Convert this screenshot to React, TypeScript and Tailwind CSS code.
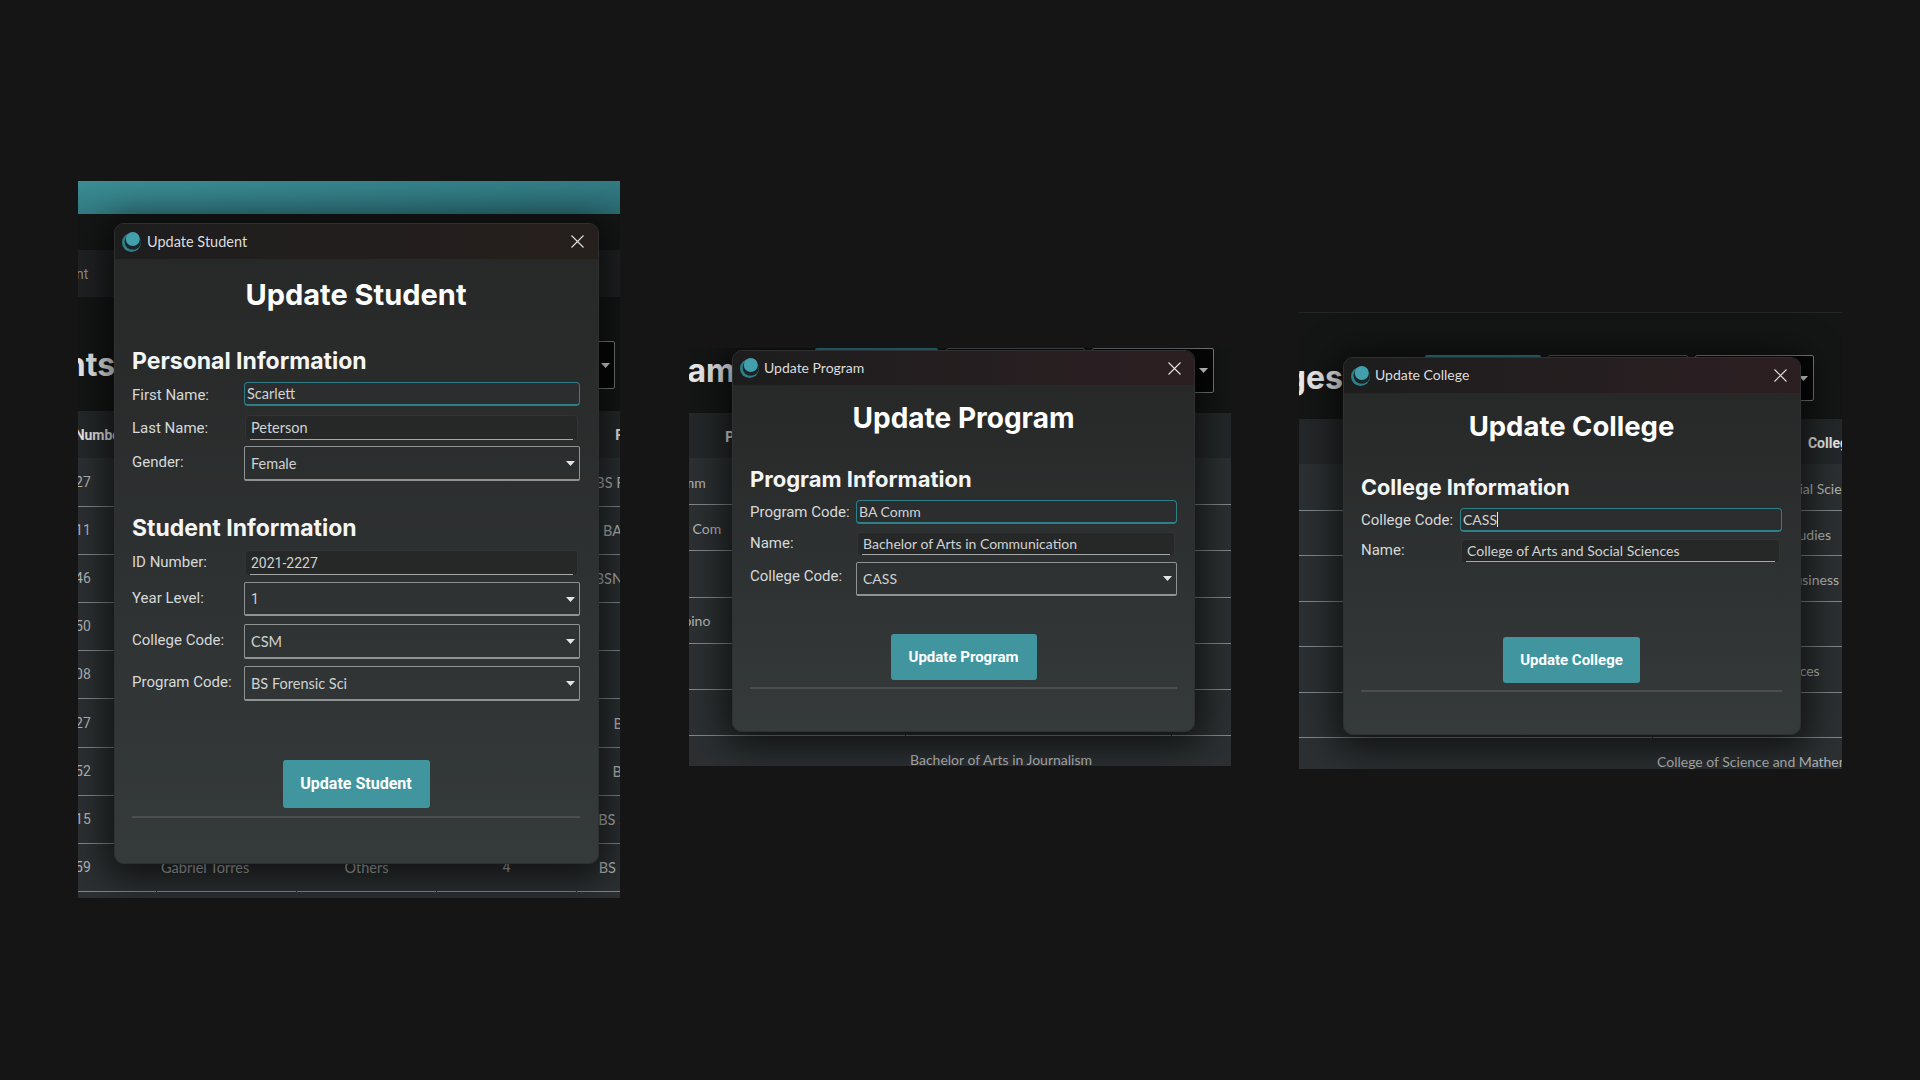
import React from "react";

const Logo = () => (
  <svg width="19" height="20" viewBox="0 0 19 20" className="shrink-0">
    <circle cx="9.5" cy="10.5" r="9.5" fill="#2d7f8a" />
    <circle cx="10.8" cy="9.6" r="8.2" fill="#1b2528" />
    <circle cx="10.8" cy="7" r="7" fill="#42a0ad" />
  </svg>
);

const CloseIcon = () => (
  <svg width="13" height="13" viewBox="0 0 13 13" className="shrink-0">
    <path d="M0.5 0.5L12.5 12.5M12.5 0.5L0.5 12.5" stroke="#e0e0e0" strokeWidth="1.1" />
  </svg>
);

const Caret = () => (
  <svg width="9" height="5" viewBox="0 0 9 5" className="shrink-0">
    <path d="M0 0H9L4.5 5Z" fill="#e4e6e6" />
  </svg>
);

// labelClass carries width and line height, valueClass the font of the value
type FieldProps = { label: string; value: string; labelClass: string; valueClass: string; box: string };

const FocusedInput = ({ label, value, labelClass, valueClass, box, caret }: FieldProps & { caret?: boolean }) => (
  <div className={`flex ${box}`}>
    <div className={`${labelClass} shrink-0 text-[15px] text-[#d6d9d9]`}>{label}</div>
    <div className={`flex-1 flex items-center rounded-[4px] border border-[#2f7f88] border-b-2 bg-[#2b2d2e] pl-[2px] text-[#d0d3d3] ${valueClass}`}>
      {value}
      {caret && <span className="w-px h-[15px] bg-[#e8e8e8]" />}
    </div>
  </div>
);

const PlainInput = ({ label, value, labelClass, valueClass, box }: FieldProps) => (
  <div className={`flex ${box}`}>
    <div className={`${labelClass} shrink-0 text-[15px] text-[#d6d9d9]`}>{label}</div>
    <div className="flex-1 ml-px mr-[2px] rounded-[4px] border border-[#313334] border-b-0 bg-[#262828] px-[4px]">
      <div className={`h-full flex items-center border-b border-[#a4a8a9] pl-px text-[#cfd2d2] ${valueClass}`}>{value}</div>
    </div>
  </div>
);

const SelectBox = ({ label, value, labelClass, valueClass, box }: FieldProps) => (
  <div className={`flex ${box}`}>
    <div className={`${labelClass} shrink-0 text-[15px] text-[#d6d9d9]`}>{label}</div>
    <div className={`flex-1 flex items-center justify-between rounded-[2px] border border-[#909394] border-b-2 pl-[6px] pr-[4px] text-[#cfd2d2] ${valueClass}`}>
      {value}
      <Caret />
    </div>
  </div>
);

type DialogProps = {
  title: string;
  place: string;
  barClass: string;
  bodyClass: string;
  titleClass: string;
  headingClass: string;
  children: React.ReactNode;
};

// the dialog floats over the app window behind it
const Dialog = ({ title, place, barClass, bodyClass, titleClass, headingClass, children }: DialogProps) => (
  <div className={`absolute ${place} flex flex-col overflow-hidden rounded-[10px] border border-[#2e3031] shadow-[0_6px_36px_8px_rgba(0,0,0,0.65)]`}>
    <div className={`flex shrink-0 items-center pl-[7px] ${barClass}`}>
      <Logo />
      <span className={`flex-1 font-['Lato'] text-[#dcdcdc] ${titleClass}`}>{title}</span>
      <CloseIcon />
    </div>
    <div className={`flex-1 bg-gradient-to-b from-[#272828] to-[#353a3b] pl-[17px] ${bodyClass}`}>
      <h1 className={`text-center font-['Inter'] font-bold leading-[36px] text-white ${headingClass}`}>{title}</h1>
      {children}
    </div>
  </div>
);

const Section = ({ text, className }: { text: string; className: string }) => (
  <h2 className={`font-['Inter'] font-bold leading-[30px] text-[#f4f5f5] ${className}`}>{text}</h2>
);

const SubmitButton = ({ text, className }: { text: string; className: string }) => (
  <button className={`mx-auto block rounded-[3px] bg-[#40959f] font-bold text-white ${className}`}>{text}</button>
);

const Divider = ({ className }: { className: string }) => <div className={`h-[2px] bg-[#4a4e4f] ${className}`} />;

type RowProps = { cells: string[]; aligns: string[]; grid: string; height: string; header?: boolean };

const TableRow = ({ cells, aligns, grid, height, header }: RowProps) => (
  <div className={`grid gap-x-px ${grid} ${height} ${header ? "bg-[#25282a]" : "bg-[#2c3032]"}`}>
    {cells.map((cell, i) => (
      <div
        key={i}
        className={`flex items-center whitespace-nowrap border-b ${
          header
            ? `justify-center border-[#2e3132] text-[14px] font-bold text-[#e8e9e9] ${aligns[i]}`
            : `border-[#7f888b] text-[#b4b7b8] ${aligns[i]}`
        }`}
      >
        {cell}
      </div>
    ))}
  </div>
);

const students = [
  ["2021-2027", "Ava Reyes", "Female", "2", "BS Forensics Sci"],
  ["2021-1111", "Liam Cruz", "Male", "1", "BA English Lit"],
  ["2021-3046", "Mia Santos", "Female", "3", "BSN Nursing Sci"],
  ["2022-1150", "Noah Lim", "Male", "2", "BSIT"],
  ["2022-0408", "Ella Tan", "Female", "4", "BSCS"],
  ["2022-1327", "Lucas Go", "Male", "1", "BS Botany"],
  ["2023-0652", "Zoe Ramos", "Female", "3", "BS Physics"],
  ["2023-1215", "Ethan Uy", "Male", "2", "BS Social Work"],
  ["2023-3059", "Gabriel Torres", "Others", "4", "BS Information"],
];

const programs = [
  ["BA Comm", "Bachelor of Arts in Communication", ""],
  ["BS Dev Com", "Bachelor of Science in Development", ""],
  ["BA", "Bachelor of Arts in English", ""],
  ["BA Filipino", "Bachelor of Arts in Filipino", ""],
  ["BA", "Bachelor of Arts in History", ""],
  ["BA", "Bachelor of Arts in Literature", ""],
  ["BA Jrn", "Bachelor of Arts in Journalism", ""],
];

const colleges = [
  ["CASS", "College of Arts and Social Sciences"],
  ["CAS", "College of Advanced Studies"],
  ["CTB", "College of Trade and Business"],
  ["CON", "College of Nursing"],
  ["CHS", "College of Health Sciences"],
  ["COL", "College of Law"],
  ["CSM", "College of Science and Mathematics"],
];

const lato145 = "pt-[1px] font-['Lato'] text-[14.5px]";
const lato14 = "font-['Lato'] text-[14px]";
const roboto14 = "pt-[1px] text-[14px]";

const StudentPanel = () => (
  <div className="relative mt-[181px] h-[717px] w-[542px] shrink-0 overflow-hidden bg-[#141515]">
    <div className="h-[33px] bg-gradient-to-br from-[#3b8d94] to-[#2a6a72]" />
    <div className="mt-[36px] flex h-[47px] items-center bg-[#1f2122] pt-[2px] text-[14px] text-[#8b8e8f]">
      <span className="-ml-[38px]">Student</span>
    </div>
    <div className="mt-[44px] flex h-[48px] items-center justify-between">
      <h2 className="-ml-[104px] font-['Inter'] text-[32px] font-bold text-[#e9eaea]">Students</h2>
      <div className="flex h-full w-[100px] items-center justify-end rounded-[2px] border border-[#7a7d7e] bg-[#070707] pr-[4px] mr-[5px]">
        <Caret />
      </div>
    </div>
    <div className="-ml-[61px] mt-[22px] w-[700px]">
      <TableRow
        header
        grid="grid-cols-[139px_139px_139px_139px_139px]"
        height="h-[48px]"
        aligns={["pl-[10px] pt-[2px]", "pt-[2px]", "pt-[2px]", "pt-[2px]", "pr-[8px] pt-[2px]"]}
        cells={["ID Number", "Name", "Gender", "Year", "Program"]}
      />
      {students.map((s) => (
        <TableRow
          key={s[0]}
          grid="grid-cols-[139px_139px_139px_139px_139px]"
          height="h-[48.1px]"
          aligns={[
            "pl-[7px] text-[14px]",
            `pl-1 ${lato145}`,
            `justify-center ${lato145}`,
            "justify-center text-[14px]",
            `justify-center ${lato145}`,
          ]}
          cells={s}
        />
      ))}
      <div className="h-[6px] bg-[#2c3032]" />
    </div>
    <Dialog
      title="Update Student"
      titleClass="ml-[6px] text-[14.5px]"
      headingClass="text-[29px]"
      place="left-[36px] top-[42px] h-[641px] w-[485px]"
      barClass="h-[35px] pr-[14px] bg-gradient-to-r from-[#1e1d1d] to-[#261f1d]"
      bodyClass="pt-[18px] pr-[18px]"
    >
      <Section text="Personal Information" className="mt-[33px] text-[23px]" />
      <FocusedInput label="First Name:" value="Scarlett" labelClass="w-[112px] leading-[26px]" valueClass={lato145} box="mt-[6px] h-[24px]" />
      <PlainInput label="Last Name:" value="Peterson" labelClass="w-[112px] leading-[27px]" valueClass={lato145} box="mt-[9px] h-[25px]" />
      <SelectBox label="Gender:" value="Female" labelClass="w-[112px] leading-[32px]" valueClass={lato145} box="mt-[6px] h-[35px]" />
      <Section text="Student Information" className="mt-[32px] text-[23px]" />
      <PlainInput label="ID Number:" value="2021-2227" labelClass="w-[112px] leading-[25px]" valueClass={roboto14} box="mt-[7px] h-[25px]" />
      <SelectBox label="Year Level:" value="1" labelClass="w-[112px] leading-[32px]" valueClass={roboto14} box="mt-[7px] h-[34px]" />
      <SelectBox label="College Code:" value="CSM" labelClass="w-[112px] leading-[32px]" valueClass={lato145} box="mt-[8px] h-[35px]" />
      <SelectBox label="Program Code:" value="BS Forensic Sci" labelClass="w-[112px] leading-[32px]" valueClass={lato145} box="mt-[7px] h-[35px]" />
      <SubmitButton text="Update Student" className="mt-[59px] h-[48px] w-[147px] text-[16px]" />
      <Divider className="mt-[8px]" />
    </Dialog>
  </div>
);

const ProgramPanel = () => (
  <div className="relative ml-[69px] mt-[348px] h-[418px] w-[542px] shrink-0 overflow-hidden bg-[#141515]">
    <div className="flex h-[45px]">
      <div className="flex w-[126px] shrink-0 items-center overflow-hidden">
        <h2 className="-ml-[87px] font-['Inter'] text-[32px] font-bold text-[#e9eaea]">Programs</h2>
      </div>
      <div className="w-[123px] shrink-0 rounded-[2px] bg-[#2f7f88]" />
      <div className="ml-[8px] w-[139px] shrink-0 rounded-[2px] border border-[#5a5d5e] bg-[#0c0c0c]" />
      <div className="ml-[7px] flex w-[122px] shrink-0 items-center justify-end rounded-[2px] border border-[#7a7d7e] bg-[#070707] pr-[5px]">
        <Caret />
      </div>
    </div>
    <div className="-ml-[49px] mt-[20px] w-[660px]">
      <TableRow
        header
        grid="grid-cols-[265px_265px_130px]"
        height="h-[46px]"
        aligns={["pr-[4px] pt-[3px]", "pr-[4px] pt-[3px]", ""]}
        cells={["Program Code", "Program Name", ""]}
      />
      {programs.map((p, i) => (
        <TableRow
          key={i}
          grid="grid-cols-[265px_265px_130px]"
          height="h-[46.2px]"
          aligns={[`pl-1 pt-[1px] ${lato14}`, `pl-1 pt-[1px] ${lato14}`, ""]}
          cells={p}
        />
      ))}
    </div>
    <Dialog
      title="Update Program"
      titleClass="ml-[5px] -mt-[2px] text-[14px]"
      headingClass="text-[28px]"
      place="left-[43px] top-[2px] h-[382px] w-[463px]"
      barClass="h-[34px] pr-[13px] bg-gradient-to-r from-[#1d1d1e] to-[#2c1f22]"
      bodyClass="pt-[15px] pr-[17px]"
    >
      <Section text="Program Information" className="mt-[28px] text-[22px]" />
      <FocusedInput label="Program Code:" value="BA Comm" labelClass="w-[106px] leading-[24px]" valueClass={lato14} box="mt-[6px] h-[24px]" />
      <PlainInput label="Name:" value="Bachelor of Arts in Communication" labelClass="w-[106px] leading-[23px]" valueClass={lato14} box="mt-[8px] h-[23px]" />
      <SelectBox label="College Code:" value="CASS" labelClass="w-[106px] leading-[29px]" valueClass={lato14} box="mt-[7px] h-[34px]" />
      <SubmitButton text="Update Program" className="mt-[38px] h-[46px] w-[146px] text-[15px]" />
      <Divider className="mt-[7px]" />
    </Dialog>
  </div>
);

const CollegePanel = () => (
  <div className="relative ml-[68px] mt-[312px] h-[457px] w-[543px] shrink-0 overflow-hidden bg-[#141515]">
    <div className="h-px bg-[#242626]" />
    <div className="mt-[42px] flex h-[46px]">
      <div className="flex w-[126px] shrink-0 items-center overflow-hidden">
        <h2 className="-ml-[93px] font-['Inter'] text-[32px] font-bold text-[#e9eaea]">Colleges</h2>
      </div>
      <div className="w-[116px] shrink-0 rounded-[2px] bg-[#2f7f88]" />
      <div className="ml-[7px] w-[140px] shrink-0 rounded-[2px] border border-[#5a5d5e] bg-[#0c0c0c]" />
      <div className="ml-[7px] flex w-[119px] shrink-0 items-center justify-end rounded-[2px] border border-[#7a7d7e] bg-[#070707] pr-[5px]">
        <Caret />
      </div>
    </div>
    <div className="-ml-[49px] mt-[18px] w-[805px]">
      <TableRow
        header
        grid="grid-cols-[402px_402px]"
        height="h-[46px]"
        aligns={["pr-[4px] pt-[3px]", "pr-[4px] pt-[3px]"]}
        cells={["College Code", "College Name"]}
      />
      {colleges.map((c) => (
        <TableRow
          key={c[0]}
          grid="grid-cols-[402px_402px]"
          height="h-[45.5px]"
          aligns={[`pl-1 pt-[3px] ${lato14}`, `pl-1 pt-[3px] ${lato14}`]}
          cells={c}
        />
      ))}
    </div>
    <Dialog
      title="Update College"
      titleClass="ml-[5px] -mt-[2px] text-[14px]"
      headingClass="text-[27.5px]"
      place="left-[44px] top-[45px] h-[378px] w-[458px]"
      barClass="h-[35px] pr-[13px] bg-gradient-to-r from-[#1d1d1e] to-[#2c1f22]"
      bodyClass="pt-[15px] pr-[18px]"
    >
      <Section text="College Information" className="mt-[28px] text-[21.7px]" />
      <FocusedInput label="College Code:" value="CASS" labelClass="w-[99px] leading-[24px]" valueClass={lato14} box="mt-[6px] h-[24px]" caret />
      <PlainInput label="Name:" value="College of Arts and Social Sciences" labelClass="w-[99px] leading-[23px]" valueClass={lato14} box="mt-[7px] h-[23px]" />
      <SubmitButton text="Update College" className="mt-[75px] h-[46px] w-[137px] text-[15px]" />
      <Divider className="mt-[7px]" />
    </Dialog>
  </div>
);

export default function App() {
  return (
    <div className="flex h-[1080px] w-[1920px] items-start overflow-hidden bg-[#151515] pl-[78px] font-['Roboto',sans-serif]">
      <StudentPanel />
      <ProgramPanel />
      <CollegePanel />
    </div>
  );
}
